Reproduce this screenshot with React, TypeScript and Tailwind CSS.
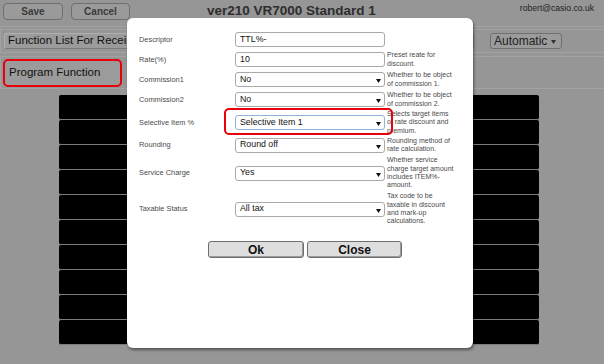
import React from "react";

type Row = {
  label: string;
  kind: "input" | "select";
  value: string;
  h: string;
  desc: string[];
  hl?: boolean;
};

const rows: Row[] = [
  { label: "Descriptor", kind: "input", value: "TTL%-", h: "h-[20px]", desc: [] },
  { label: "Rate(%)", kind: "input", value: "10", h: "h-[20px]", desc: ["Preset reate for", "discount."] },
  { label: "Commission1", kind: "select", value: "No", h: "h-[20px]", desc: ["Whether to be object", "of commission 1."] },
  { label: "Commission2", kind: "select", value: "No", h: "h-[20px]", desc: ["Whether to be object", "of commission 2."] },
  {
    label: "Selective Item %",
    kind: "select",
    value: "Selective Item 1",
    h: "h-[26px]",
    desc: ["Selects target items", "of rate discount and", "premium."],
    hl: true,
  },
  { label: "Rounding", kind: "select", value: "Round off", h: "h-[19px]", desc: ["Rounding method of", "rate calculation."] },
  {
    label: "Service Charge",
    kind: "select",
    value: "Yes",
    h: "h-[37px]",
    desc: ["Whether service", "charge target amount", "includes ITEM%-", "amount."],
  },
  {
    label: "Taxable Status",
    kind: "select",
    value: "All tax",
    h: "h-[35px]",
    desc: ["Tax code to be", "taxable in discount", "and mark-up", "calculations."],
  },
];

function Arrow() {
  return (
    <svg width="5" height="4" viewBox="0 0 5 4" className="absolute right-[3px] top-[6px]">
      <path d="M0 0 L5 0 L2.5 4 Z" fill="#111" />
    </svg>
  );
}

export default function App() {
  const blackRows = Array.from({ length: 10 });
  return (
    <div
      className="relative w-[604px] h-[364px] overflow-hidden bg-[#969696]"
      style={{ fontFamily: '"Liberation Sans", Arial, sans-serif' }}
    >
      {/* header */}
      <div className="flex items-start h-[27px] px-[3px] pt-[3px] border-b border-[#a2a2a2]">
        <div className="w-[60px] h-[17px] rounded-[4px] border border-[#6e6e6e] bg-[#9a9a9a] flex items-center justify-center text-[10px] font-bold text-[#3a3a3a]">
          Save
        </div>
        <div className="ml-[8px] w-[59px] h-[17px] rounded-[4px] border border-[#6e6e6e] bg-[#9a9a9a] flex items-center justify-center text-[10px] font-bold text-[#3a3a3a]">
          Cancel
        </div>
        <div className="ml-[77px] text-[13.5px] leading-[15px] font-bold text-[#2e2e2e]">ver210 VR7000 Standard 1</div>
        <div className="ml-auto mr-[7px] text-[8.6px] leading-[11px] text-[#222]">robert@casio.co.uk</div>
      </div>

      {/* function list panel */}
      <div className="mt-[2px] h-[24px] border-y border-l border-[#a2a2a2] flex items-center px-[3px]">
        <div className="w-[470px] h-[16px] rounded-[3px] border border-[#7a7a7a] border-t-[#b0b0b0] border-l-[#b0b0b0] bg-[#9b9b9b] flex items-center px-[3px] text-[11.5px] text-[#111] whitespace-nowrap overflow-hidden">
          Function List For Receipt
        </div>
        <div className="relative ml-[16px] w-[72px] h-[16px] rounded-[3px] border border-[#707070] bg-[#9b9b9b] flex items-center pl-[3px] text-[12px] text-[#222]">
          Automatic
          <svg width="5" height="4" viewBox="0 0 5 4" className="absolute right-[5px] top-[6px]">
            <path d="M0 0 L5 0 L2.5 4 Z" fill="#333" />
          </svg>
        </div>
      </div>

      {/* program function panel */}
      <div className="mt-[3px] h-[33px] border-y border-l border-[#a2a2a2] flex items-center px-[2px]">
        <div className="w-[119px] h-[28px] rounded-[5px] border-2 border-[#e8000a] bg-[#9b9b9b] flex items-center px-[4px] text-[11.5px] text-[#111]">
          Program Function
        </div>
      </div>

      {/* black rows */}
      <div className="mt-[6px] ml-[59px] w-[480px] flex flex-col">
        {blackRows.map((_, i) => (
          <div key={i} className="h-[25px] bg-black rounded-[2px] border-b border-[#7c7c7c]" />
        ))}
      </div>

      {/* modal */}
      <div className="absolute left-[127px] top-[18px] w-[346px] h-[330px] bg-white rounded-[6px] shadow-[1px_2px_3px_rgba(0,0,0,0.45)] pt-[11.5px]">
        {rows.map((r) => (
          <div key={r.label} className={`flex items-center ${r.h}`}>
            <div className="w-[108px] pl-[12px] text-[7.4px] text-[#4a4a4a] whitespace-nowrap">{r.label}</div>
            <div className="relative w-[150px] h-[15px]">
              <div
                className={`relative w-[150px] h-[15px] rounded-[3px] border bg-white flex items-center pl-[4px] text-[8.8px] text-[#111] ${
                  r.hl ? "border-[#8fb1db]" : "border-[#a9a9a9]"
                }`}
              >
                {r.value}
                {r.kind === "select" && <Arrow />}
              </div>
              {r.hl && (
                <div className="absolute left-[-11px] top-[-7px] w-[169px] h-[27px] rounded-[5px] border-2 border-[#e8000a]" />
              )}
            </div>
            <div className="ml-[2px] text-[7px] leading-[8.3px] text-[#4a4a4a] whitespace-nowrap">
              {r.desc.map((d, i) => (
                <div key={i}>{d}</div>
              ))}
            </div>
          </div>
        ))}

        <div className="flex mt-[14.5px] ml-[81px]">
          <div className="w-[96px] h-[17px] rounded-[3px] border border-[#6f6f6f] bg-[#dedede] flex items-center justify-center text-[12px] font-bold text-[#111] shadow-[inset_-1px_-1px_0_#9a9a9a]">
            Ok
          </div>
          <div className="ml-[3px] w-[95px] h-[17px] rounded-[3px] border border-[#6f6f6f] bg-[#dedede] flex items-center justify-center text-[12px] font-bold text-[#111] shadow-[inset_-1px_-1px_0_#9a9a9a]">
            Close
          </div>
        </div>
      </div>
    </div>
  );
}
